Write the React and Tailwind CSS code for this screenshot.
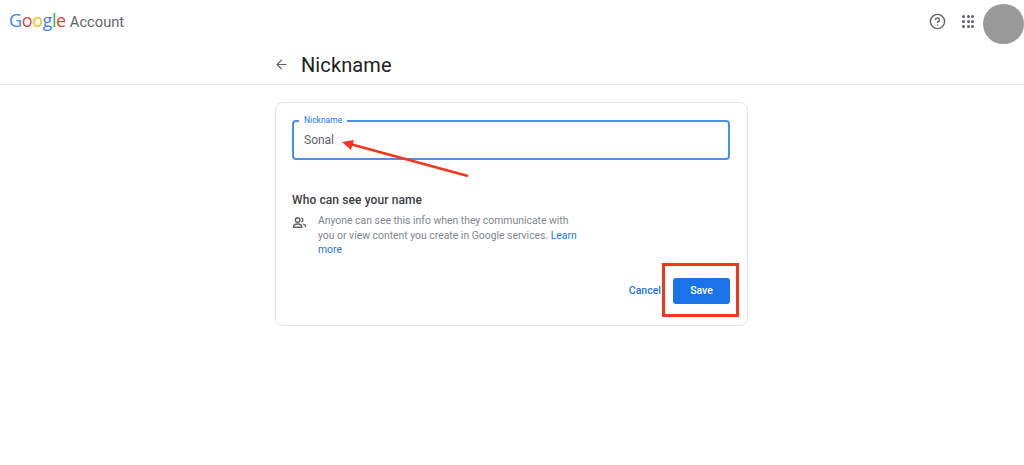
import React from 'react'
import { ArrowLeft, CircleHelp } from 'lucide-react'

function GoogleLogo() {
  const letters = [
    ['G', 'text-[#4285f4]'],
    ['o', 'text-[#ea4335]'],
    ['o', 'text-[#fbbc05]'],
    ['g', 'text-[#4285f4]'],
    ['l', 'text-[#34a853]'],
    ['e', 'text-[#ea4335]'],
  ]
  return (
    <span className="text-[18px] tracking-[-0.4px] font-['Open_Sans',sans-serif]">
      {letters.map(([l, c], i) => (
        <span key={i} className={c}>{l}</span>
      ))}
    </span>
  )
}

function AppsIcon() {
  const dots = [0, 1, 2, 3, 4, 5, 6, 7, 8]
  return (
    <div className="grid grid-cols-3 gap-[2px] w-[12px]">
      {dots.map(d => (
        <div key={d} className="w-[3px] h-[3px] rounded-full bg-[#5f6368]" />
      ))}
    </div>
  )
}

function PeopleIcon() {
  return (
    <svg width="15" height="15" viewBox="0 0 24 24" fill="none" stroke="#5f6368" strokeWidth="2.2">
      <circle cx="9" cy="8" r="3.6" />
      <path d="M2.5 19.5v-1.6c0-2.2 3.4-3.6 6.5-3.6s6.5 1.4 6.5 3.6v1.6z" />
      <path d="M15 4.6a3.6 3.6 0 0 1 0 6.8" />
      <path d="M18 14.6c2 .6 3.6 1.7 3.6 3.3v1.6" />
    </svg>
  )
}

export default function App() {
  return (
    <div className="relative w-[1024px] h-[465px] overflow-hidden bg-white font-['Roboto','Liberation_Sans',sans-serif]">
      {/* Top bar */}
      <header className="flex items-center h-[44px]">
        <div className="flex items-baseline gap-[4px] pl-[9px] -mt-[3px]">
          <GoogleLogo />
          <span className="text-[14.7px] text-[#5f6368]">Account</span>
        </div>
        <div className="ml-auto flex items-center pt-[4px]">
          <CircleHelp size={17} strokeWidth={2} color="#5f6368" className="mr-[16px] -mt-[6px]" />
          <div className="-mt-[6px]">
            <AppsIcon />
          </div>
          <div className="w-[41px] h-[40px] rounded-full bg-[#999999] ml-[9px]" />
        </div>
      </header>

      {/* Page title */}
      <div className="h-[41px] border-b border-[#e6e6e6] pl-[274px] flex items-center">
        <ArrowLeft size={15} strokeWidth={1.8} color="#5f6368" />
        <h1 className="ml-[12px] mt-[1px] text-[20px] tracking-[0.1px] text-[#202124]">Nickname</h1>
      </div>

      {/* Card */}
      <div className="ml-[275px] mt-[17px] w-[473px] h-[224px] border border-[#e3e4e6] rounded-[8px] px-[16px] pt-[17px]">
        <div className="relative h-[40px] mr-[1px] border-2 border-[#4a90ec] rounded-[4px] flex items-center pl-[10px]">
          <span className="absolute -top-[7px] left-[5px] bg-white px-[5px] text-[8.5px] leading-[11px] text-[#1a73e8]">Nickname</span>
          <span className="text-[12px] text-[#5f6368]">Sonal</span>
        </div>

        <h2 className="mt-[32px] text-[12px] tracking-[0.1px] leading-[16px] font-medium text-[#3c4043]">Who can see your name</h2>

        <div className="flex mt-[6px]">
          <div className="w-[26px] pt-[1px] shrink-0">
            <PeopleIcon />
          </div>
          <p className="w-[268px] text-[10.4px] leading-[14.5px] text-[#80868b]">
            Anyone can see this info when they communicate with you or view content you create in Google services.{' '}
            <span className="text-[#1a73e8]">Learn more</span>
          </p>
        </div>

        <div className="flex justify-end items-center mt-[20px] mr-[1px]">
          <span className="text-[10.5px] font-medium text-[#1a73e8] mr-[12px]">Cancel</span>
          <button className="w-[57px] h-[26px] rounded-[3px] bg-[#1a73e8] text-white text-[10.5px] font-medium">Save</button>
        </div>
      </div>

      {/* Red annotations */}
      <svg className="absolute left-[335px] top-[130px]" width="140" height="50" viewBox="0 0 140 50">
        <path d="M133 46 L15 14" stroke="#f4361e" strokeWidth="2.4" fill="none" />
        <path d="M7 12 L19 10 L16 20 Z" fill="#f4361e" />
      </svg>
      <div className="absolute left-[662px] top-[263px] w-[77px] h-[54px] border-[3px] border-[#f4361e]" />
    </div>
  )
}
